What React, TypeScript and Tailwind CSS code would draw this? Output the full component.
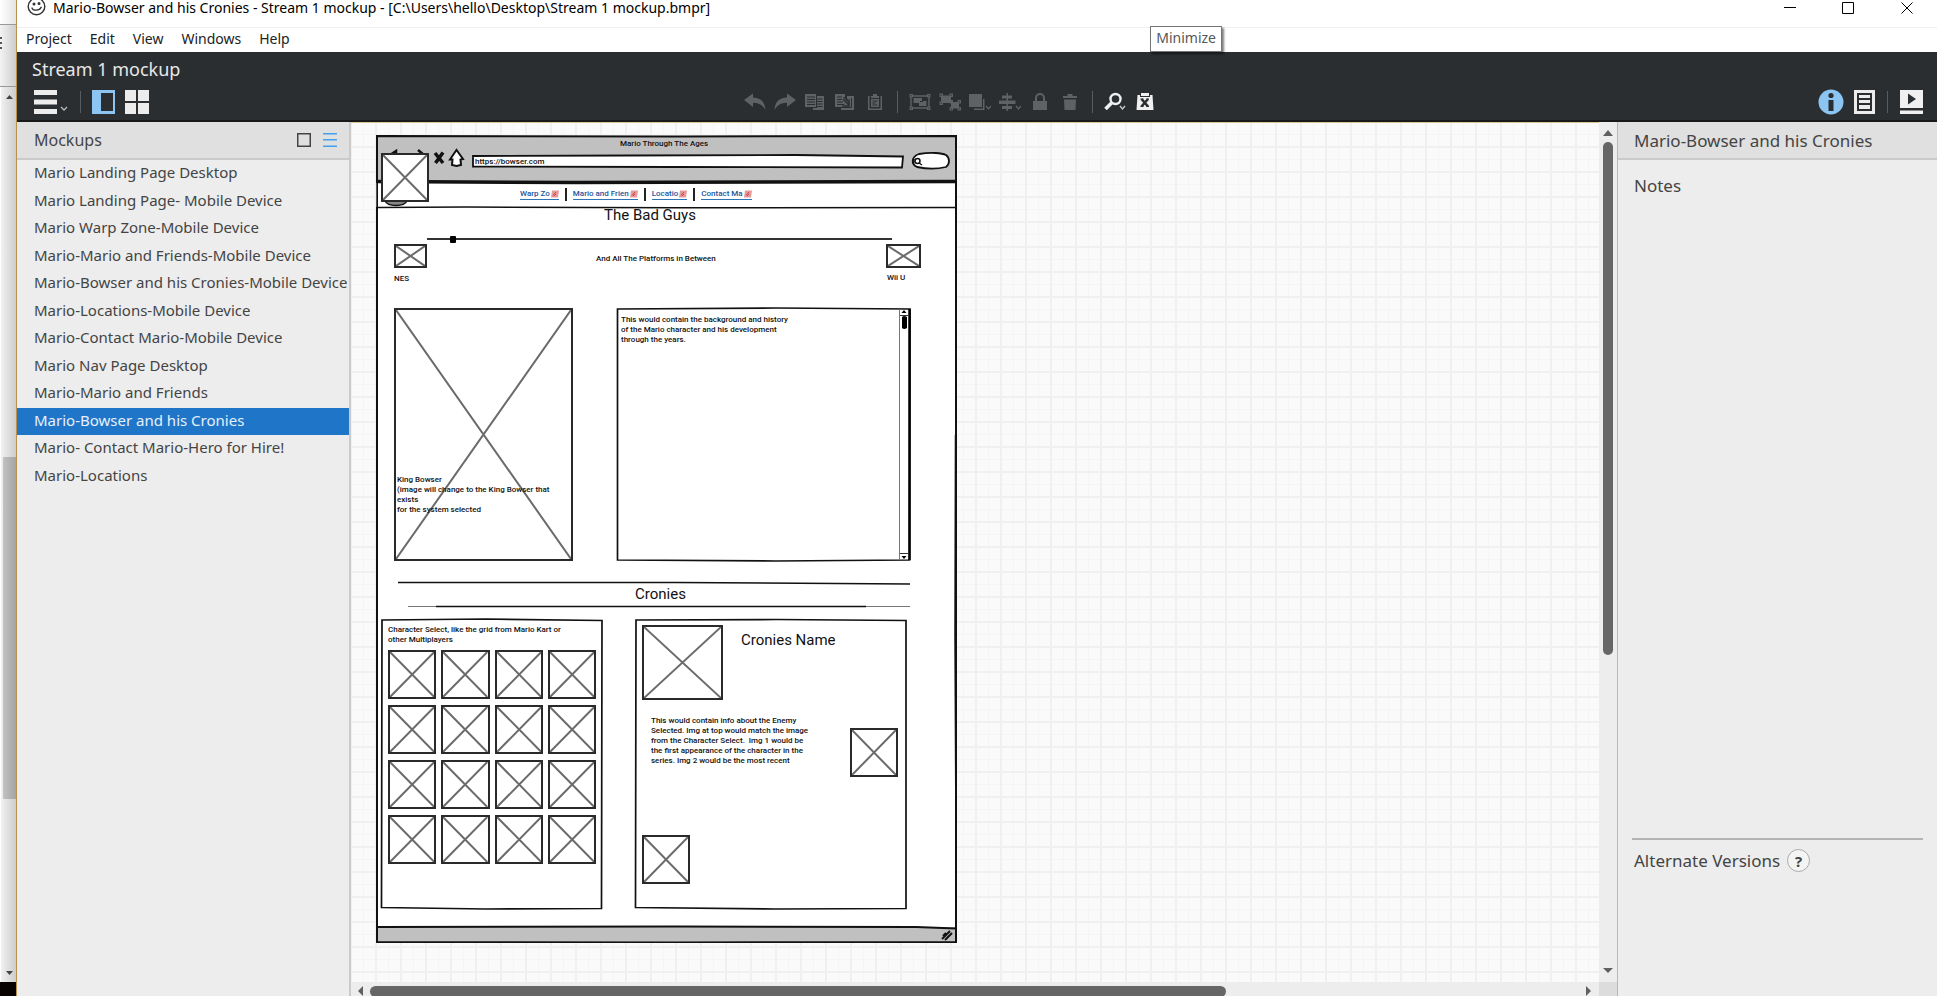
import React from "react";

const UI = "font-['Noto_Sans','Open_Sans',sans-serif]";

const mockups = [
  "Mario Landing Page Desktop",
  "Mario Landing Page- Mobile Device",
  "Mario Warp Zone-Mobile Device",
  "Mario-Mario and Friends-Mobile Device",
  "Mario-Bowser and his Cronies-Mobile Device",
  "Mario-Locations-Mobile Device",
  "Mario-Contact Mario-Mobile Device",
  "Mario Nav Page Desktop",
  "Mario-Mario and Friends",
  "Mario-Bowser and his Cronies",
  "Mario- Contact Mario-Hero for Hire!",
  "Mario-Locations",
];
const selectedMockup = "Mario-Bowser and his Cronies";

const menus = ["Project", "Edit", "View", "Windows", "Help"];

function Arrow({ dir, className = "" }: { dir: "up" | "down" | "left" | "right"; className?: string }) {
  const d = {
    up: "M0 6 L5 0 L10 6Z",
    down: "M0 0 L5 5 L10 0Z",
    left: "M5 0 L0 5 L5 10Z",
    right: "M0 0 L5 5 L0 10Z",
  }[dir];
  const vertical = dir === "up" || dir === "down";
  return (
    <svg width={vertical ? 10 : 5} height={vertical ? 6 : 10} className={`shrink-0 fill-[#606060] ${className}`} aria-hidden="true">
      <path d={d} />
    </svg>
  );
}

function BackgroundWindow() {
  return (
    <div className="flex w-4 shrink-0 flex-col bg-gradient-to-r from-[#f3f3f3] to-[#cdcdcd]">
      <div className="h-[25px] border-b border-[#999] bg-gradient-to-r from-white to-[#e4e4e4]" />
      <div className="flex h-[62px] flex-col gap-[3px] border-b border-[#999] pt-[12px]">
        <span className="h-[2px] w-[2px] bg-[#555]" />
        <span className="h-[2px] w-[2px] bg-[#555]" />
        <span className="h-[2px] w-[2px] bg-[#555]" />
      </div>
      <div className="flex flex-1 flex-col border-l border-white">
        <svg width="8" height="5" className="mt-[8px] ml-[5px] fill-[#444]" aria-hidden="true">
          <path d="M0 4 L3.5 0 L7 4Z" />
        </svg>
        <div className="flex flex-1 flex-col pl-[2px]">
          <div className="flex-[357]" />
          <div className="flex-[342] bg-gradient-to-r from-[#c2c2c2] to-[#a4a4a4]" />
          <div className="flex-[172]" />
        </div>
        <svg width="8" height="4" className="mb-[7px] ml-[5px] fill-[#444]" aria-hidden="true">
          <path d="M0 0 L3.5 4 L7 0Z" />
        </svg>
      </div>
      <div className="h-[14px] bg-[#080300]" />
    </div>
  );
}

function TitleBar() {
  return (
    <header className="flex h-[27px] items-start justify-between bg-white pl-[10px]">
      <div className="flex h-[16px] items-center gap-[7px]">
        <svg width="19" height="19" viewBox="0 0 19 19" className="-mt-1" fill="none" stroke="#333" strokeWidth="1.4" aria-hidden="true">
          <circle cx="9.5" cy="9.5" r="8.3" />
          <path d="M5 11.2c1 2.6 7.6 2.8 9-.6M4.6 11.4l1-.7M13.6 10l1.1.6" />
          <circle cx="7" cy="7" r=".8" fill="#333" />
          <circle cx="12" cy="6.6" r=".8" fill="#333" />
        </svg>
        <h1 className="text-[14px] leading-[16px] text-black">
          Mario-Bowser and his Cronies - Stream 1 mockup - [C:\Users\hello\Desktop\Stream 1 mockup.bmpr]
        </h1>
      </div>
      <div className="flex">
        <button aria-label="Minimize window" className="flex h-[16px] w-[58px] items-center justify-center">
          <svg width="12" height="12" stroke="#000"><path d="M0 5.5H12" /></svg>
        </button>
        <button aria-label="Maximize window" className="flex h-[16px] w-[58px] items-center justify-center">
          <svg width="12" height="12" stroke="#000" fill="none"><path d="M.5 .5H11.5V11.5H.5Z" /></svg>
        </button>
        <button aria-label="Close window" className="flex h-[16px] w-[60px] items-center justify-center">
          <svg width="12" height="12" stroke="#000"><path d="M.5 .5L11.5 11.5M11.5 .5L.5 11.5" /></svg>
        </button>
      </div>
    </header>
  );
}

function MenuBar() {
  return (
    <nav className="flex h-[25px] items-center gap-[18px] border-t border-[#f0f0f0] bg-white pb-[2px] pl-[9px]">
      {menus.map((m) => (
        <button key={m} className="text-[14px] leading-[20px] text-[#222]">
          {m}
        </button>
      ))}
    </nav>
  );
}

function ToolButton({ label, children }: { label: string; children: React.ReactNode }) {
  return (
    <button aria-label={label} className="flex h-[26px] w-[30px] items-center justify-center text-[#5f6163]">
      {children}
    </button>
  );
}

function Separator() {
  return <span className="mx-[7px] h-[22px] w-px bg-[#5a5d60]" />;
}

function Icon({ children, color = "currentColor" }: { children: React.ReactNode; color?: string }) {
  return (
    <svg width="22" height="20" viewBox="0 0 22 20" fill={color} aria-hidden="true">
      {children}
    </svg>
  );
}

const BG = "#2a2e31";

function Toolbar() {
  return (
    <section className="flex h-[70px] flex-col border-b-2 border-[#18191a] bg-[#2a2e31] pl-[15px]">
      <h2 className="h-[36px] text-[18px] leading-[34px] text-[#e8e8e8]">Stream 1 mockup</h2>
      <div className="flex h-[28px] items-center justify-between pr-[14px] pl-[2px]">
        <div className="flex items-center">
          <button aria-label="Main menu" className="flex items-end">
            <svg width="35" height="24" viewBox="0 0 35 24" aria-hidden="true">
              <path d="M0 0H23V5H0ZM0 9.5H23V14.5H0ZM0 19H23V24H0Z" fill="#ececec" />
              <path d="M27 17l3 3 3-3" fill="none" stroke="#bbb" strokeWidth="1.3" />
            </svg>
          </button>
          <span className="mr-[11px] ml-[11px] h-[22px] w-px bg-[#5a5d60]" />
          <button aria-label="Toggle navigator">
            <svg width="23" height="24" aria-hidden="true">
              <path d="M0 0H23V24H0Z" fill="#8cc4f2" />
              <path d="M9 3H21V21H9Z" fill={BG} />
            </svg>
          </button>
          <button aria-label="Thumbnail grid" className="ml-[10px]">
            <svg width="24" height="24" fill="#ececec" aria-hidden="true">
              <path d="M0 0H11V11H0ZM13 0H24V11H13ZM0 13H11V24H0ZM13 13H24V24H13Z" />
            </svg>
          </button>
        </div>

        <div className="flex items-center pr-[68px]">
          <ToolButton label="Undo">
            <Icon>
              <path d="M0 8L9 1.5V5.6C17 6 21 10 21.5 18C18.5 13 15 11 9 10.8V15Z" />
            </Icon>
          </ToolButton>
          <ToolButton label="Redo">
            <Icon>
              <path d="M22 8L13 1.5V5.6C5 6 1 10 .5 18C3.5 13 7 11 13 10.8V15Z" />
            </Icon>
          </ToolButton>
          <ToolButton label="Duplicate">
            <Icon>
              <path d="M1 2H12V15H1ZM13 4H20V18H9V16H13Z" />
              <path d="M3 5H11M3 7.5H11M3 10H11M3 12.5H11M13 7H18.500M13 9.500H18.500M13 12H18.500M13 14.500H18.500" stroke={BG} strokeWidth="1" />
            </Icon>
          </ToolButton>
          <ToolButton label="Copy">
            <Icon>
              <path d="M1 2H11V5H9L14 10V7H13V4H20V18H7V16H13V15H1Z" />
              <path d="M3 5H8M3 7.500H8M3 10H9M3 12.500H10" stroke={BG} strokeWidth="1" />
              <path d="M9 7L15 13M15 7.500V14H8.500" stroke={BG} strokeWidth="1.600" fill="none" />
              <path d="M17.500 6V15.500H12" stroke={BG} strokeWidth="1" fill="none" />
            </Icon>
          </ToolButton>
          <ToolButton label="Paste">
            <Icon>
              <path d="M4 4H5.500V16.500H16.500V4H18V18H4ZM7 4H9V2H13V4H15V6H7ZM7 7H15V15H7Z" />
              <path d="M8.500 9H13.500M8.500 11H11.500M8.500 13H13.500" stroke={BG} strokeWidth="1" />
            </Icon>
          </ToolButton>
          <Separator />
          <ToolButton label="Group">
            <Icon>
              <path d="M2 4H20V16H2Z" fill="none" stroke="currentColor" strokeWidth="1.400" />
              <path d="M4.500 6H13V9H17.500V14H10V11H4.500Z" />
              <path d="M11 9.500H14" stroke={BG} />
              <path d="M.5 2H4V5.500H.5ZM18 2H21.500V5.500H18ZM.5 14.500H4V18H.5ZM18 14.500H21.500V18H18Z" />
              <path d="M1.700 3.200H2.800V4.300H1.700ZM19.200 3.200H20.300V4.300H19.200ZM1.700 15.700H2.800V16.800H1.700ZM19.200 15.700H20.300V16.800H19.200Z" fill={BG} />
            </Icon>
          </ToolButton>
          <ToolButton label="Ungroup">
            <Icon>
              <path d="M2 3.500H12V11H2ZM12 10H20V16.500H12Z" />
              <path d="M.5 1.500H4V5H.5ZM10.500 1.500H14V5H10.500ZM.5 9.500H4V13H.5ZM10.500 8H14V11.500H10.500ZM18.500 8H22V11.500H18.500ZM10.500 15H14V18.500H10.500ZM18.500 15H22V18.500H18.500Z" />
              <path d="M1.700 2.700H2.800V3.800H1.700ZM11.700 2.700H12.800V3.800H11.700ZM1.700 10.700H2.800V11.800H1.700ZM19.700 9.200H20.800V10.300H19.700ZM11.700 16.200H12.800V17.300H11.700ZM19.700 16.200H20.800V17.300H19.700Z" fill={BG} />
            </Icon>
          </ToolButton>
          <ToolButton label="Layering">
            <Icon>
              <path d="M0 2H13V15H0ZM14 7H15.500V18H5V16.500H14Z" />
              <path d="M17 14l2.500 3 2.500-3" fill="none" stroke="currentColor" strokeWidth="1.300" />
            </Icon>
          </ToolButton>
          <ToolButton label="Alignment">
            <Icon>
              <path d="M7.500 1H9V19H7.500ZM3 3.500H13V6.500H3ZM0 8.500H16.500V12H0ZM3 14H13V17H3Z" />
              <path d="M17 14l2.500 3 2.500-3" fill="none" stroke="currentColor" strokeWidth="1.300" />
            </Icon>
          </ToolButton>
          <ToolButton label="Lock">
            <Icon>
              <path d="M4 9H18V18H4Z" />
              <path d="M7 10V6A4 4 0 0 1 15 6V10" fill="none" stroke="currentColor" strokeWidth="2" />
            </Icon>
          </ToolButton>
          <ToolButton label="Delete">
            <Icon>
              <path d="M4 4H8.500V2H13.500V4H18V6H4ZM5 7.500H17L16.500 18H5.500Z" />
            </Icon>
          </ToolButton>
          <Separator />
          <ToolButton label="Zoom">
            <Icon color="#f0f0f0">
              <path d="M1.500 17L7.500 11" stroke="#f0f0f0" strokeWidth="3.500" />
              <circle cx="11.500" cy="7" r="5" fill="none" stroke="#f0f0f0" strokeWidth="2.400" />
              <path d="M16 14l2.500 3 2.500-3" fill="none" stroke="#ccc" strokeWidth="1.300" />
            </Icon>
          </ToolButton>
          <ToolButton label="Toggle markup">
            <Icon color="#f0f0f0">
              <path d="M7 1H15V4H7ZM3.500 3H6V5H16V3H18.500L19.500 18H2.500Z" />
              <path d="M7.500 7L14 14.500M14 7L7.500 14.500" stroke={BG} strokeWidth="2.600" />
              <path d="M6.500 7H9.500M12.500 7H15M6.500 14.500H9.500M12.500 14.500H15" stroke={BG} strokeWidth="1" />
            </Icon>
          </ToolButton>
        </div>

        <div className="flex items-center">
          <button aria-label="Project information">
            <svg width="26" height="26" aria-hidden="true">
              <circle cx="13" cy="13" r="12.500" fill="#8cc4f2" />
              <circle cx="13" cy="6.500" r="2.600" fill={BG} />
              <path d="M10.500 11H15.500V22H10.500Z" fill={BG} />
            </svg>
          </button>
          <button aria-label="Inspector" className="ml-[10px]">
            <svg width="21" height="24" aria-hidden="true">
              <path d="M0 0H21V24H0Z" fill="#ececec" />
              <path d="M3 3H18V21H3Z" fill={BG} />
              <path d="M5 5H16V8H5ZM5 10H16V13H5ZM5 15H16V19H5Z" fill="#ececec" />
            </svg>
          </button>
          <span className="mx-[12px] h-[22px] w-px bg-[#5a5d60]" />
          <button aria-label="Full screen presentation">
            <svg width="23" height="24" aria-hidden="true">
              <path d="M0 0H23V18H0ZM0 20.500H23V24H0Z" fill="#f0f0f0" />
              <path d="M8 3.500L16 9L8 14.500Z" fill={BG} />
            </svg>
          </button>
        </div>
      </div>
    </section>
  );
}

function Navigator() {
  return (
    <aside className="flex w-[334px] shrink-0 flex-col border-r-2 border-[#cacaca] bg-[#ededed]">
      <div className="flex h-[38px] items-center justify-between border-b-2 border-[#cacaca] bg-[#e0e0e0] pr-[12px] pl-[17px]">
        <h2 className="text-[16px] leading-[22px] text-[#444]">Mockups</h2>
        <div className="flex items-center gap-[12px]">
          <button aria-label="Show thumbnails">
            <svg width="14" height="14" fill="none" stroke="#444" strokeWidth="1.500" aria-hidden="true">
              <path d="M.75 .75H13.250V13.250H.75Z" />
            </svg>
          </button>
          <button aria-label="Show list">
            <svg width="14" height="14" fill="#42a0ee" aria-hidden="true">
              <path d="M0 0H14V1.500H0ZM0 6H14V7.500H0ZM0 12.500H14V14H0Z" />
            </svg>
          </button>
        </div>
      </div>
      <ul className="flex h-[330px] flex-col overflow-hidden">
        {mockups.map((name) => (
          <li key={name} className="flex min-h-0 flex-1">
            <button
              aria-current={name === selectedMockup ? "page" : undefined}
              className={
                name === selectedMockup
                  ? "flex w-full items-center overflow-hidden bg-[#1f76c8] pb-[3px] pl-[17px] text-[15px] leading-[20px] whitespace-nowrap text-[#e6f0fa]"
                  : "mr-[2px] flex w-full items-center overflow-hidden pb-[3px] pl-[17px] text-[15px] leading-[20px] whitespace-nowrap text-[#444]"
              }
            >
              {name}
            </button>
          </li>
        ))}
      </ul>
    </aside>
  );
}

function Placeholder({ className = "" }: { className?: string }) {
  return (
    <div className={`border-2 border-[#2a2a2a] bg-white ${className}`}>
      <svg className="block h-full w-full" viewBox="0 0 100 100" preserveAspectRatio="none" stroke="#6b6b6b" aria-hidden="true">
        <path d="M0 0L100 100M100 0L0 100" strokeWidth="2" vectorEffect="non-scaling-stroke" />
      </svg>
    </div>
  );
}

function NavLink({ children }: { children: React.ReactNode }) {
  return (
    <a href="#mockup" className="flex h-[10px] items-center border-b border-[#2f74b5] leading-[10px] text-[#1c559c]">
      {children}
      <svg width="8" height="8" className="ml-px" aria-hidden="true">
        <path d="M1 0.500H8L7 7.500H0Z" fill="#e79a9a" />
        <path d="M2 5.500L5 2M3 6L5 4" stroke="#b33" strokeWidth=".8" />
      </svg>
    </a>
  );
}

function Artboard() {
  return (
    <article
      id="mockup"
      className="absolute top-[12px] left-[25px] h-[808px] w-[581px] bg-white font-['Roboto','Lato',sans-serif] text-[8px] leading-[10px] font-medium text-[#111]"
    >
      <svg width="581" height="808" viewBox="0 0 581 808" className="absolute inset-0" fill="none" stroke="#111" aria-hidden="true">
        <path d="M1 1H580V47H1Z" fill="#c0c0c0" stroke="none" />
        <path d="M1 792H580V807H1Z" fill="#c0c0c0" stroke="none" />
        <path d="M1 1L300 1.500L580 1L580 807L300 807.500L1 807Z" strokeWidth="2" />
        <path d="M579.500 300L579 500L580.500 806" strokeWidth="1.500" />
        <path d="M1 46.500L200 47.500L581 46.500" strokeWidth="3.500" />
        <path d="M1 72.500L90 72L300 72.800L581 72.500" strokeWidth="1.500" />
        <path d="M1 792L300 791.500L540 792L580 793.500" strokeWidth="2" />
        <path d="M0 48V72" stroke="#999" />
        <path d="M566 804L574 796M569 805L576 798M567 801L570 798" strokeWidth="2" />
        <path d="M59 18L67 28M67 17.500L59.500 28" strokeWidth="3.500" />
        <path d="M74 24.500L80.500 15L87 24L84.500 24.500L85 30L80.500 31L76 30L76.500 24.500Z" fill="#fff" strokeWidth="2" />
        <path d="M14 20L20 16V20M42 15L48 20" strokeWidth="2.500" />
        <path d="M9 66C12 72 28 72 31 66Z" fill="#888" strokeWidth="1.500" />
        <path d="M97 21L250 20.500L420 20L527 21.500L526 32.500L300 32L97 31.500Z" fill="#fff" strokeWidth="1.800" />
        <path d="M543 19C555 17 566 18 570 20C574 23 574 29 570 32C562 34 550 34 541 32C535 29 535 22 543 19Z" fill="#fff" strokeWidth="1.800" />
        <circle cx="541.500" cy="26" r="2.500" strokeWidth="1.500" />
        <path d="M538 24L537.500 29M543 28L546 30" strokeWidth="1.500" />
        <path d="M22 447.500L300 447.500L534 449" strokeWidth="1.500" />
        <path d="M60 471.500H490" strokeWidth="1.500" />
        <path d="M32 471.500H60M490 471.500H534" stroke="#777" strokeWidth="1" />
        <path d="M6 485L110 484L226 485.500L225.500 773.500L110 774L5.500 772.500Z" strokeWidth="1.700" />
        <path d="M260 485L400 484.500L530 485.500L530 773.500L400 774L259.500 772.500Z" strokeWidth="1.700" />
        <path d="M241.500 174L400 173L534 174L533.500 425L400 426L241.500 425Z" strokeWidth="1.700" />
      </svg>

      <p className="absolute top-[4px] left-[244px]">Mario Through The Ages</p>
      <Placeholder className="absolute top-[18px] left-[5px] h-[49px] w-[48px]" />
      <input
        aria-label="Address"
        readOnly
        value="https://bowser.com"
        className="absolute top-[22px] left-[99px] h-[9px] w-[420px] bg-transparent outline-none"
      />
      <input aria-label="Search" readOnly value="" className="absolute top-[21px] left-[548px] h-[9px] w-[20px] bg-transparent outline-none" />

      <nav className="absolute top-[53px] left-[144px] flex h-[13px] items-center gap-[6px]">
        <NavLink>Warp Zo</NavLink>
        <span className="h-[13px] w-[2px] bg-[#222]" />
        <NavLink>Mario and Frien</NavLink>
        <span className="h-[13px] w-[2px] bg-[#222]" />
        <NavLink>Locatio</NavLink>
        <span className="h-[13px] w-[2px] bg-[#222]" />
        <NavLink>Contact Ma</NavLink>
      </nav>

      <h2 className="absolute top-[71px] left-[228px] text-[15px] leading-[18px] font-normal">The Bad Guys</h2>

      <input
        type="range"
        aria-label="Platform"
        defaultValue={5}
        className="absolute top-[100px] left-[51px] h-[8px] w-[465px] appearance-none bg-[linear-gradient(#333,#333)] bg-[length:100%_2px] bg-center bg-no-repeat [&::-webkit-slider-thumb]:h-[7px] [&::-webkit-slider-thumb]:w-[6px] [&::-webkit-slider-thumb]:appearance-none [&::-webkit-slider-thumb]:rounded-[1px] [&::-webkit-slider-thumb]:bg-black"
      />
      <Placeholder className="absolute top-[109px] left-[18px] h-[24px] w-[33px]" />
      <p className="absolute top-[139px] left-[18px]">NES</p>
      <p className="absolute top-[119px] left-[220px]">And All The Platforms in Between</p>
      <Placeholder className="absolute top-[109px] left-[510px] h-[24px] w-[35px]" />
      <p className="absolute top-[138px] left-[511px]">Wii U</p>

      <Placeholder className="absolute top-[173px] left-[18px] h-[253px] w-[179px]" />
      <p className="absolute top-[340px] left-[21px] w-[162px]">
        King Bowser
        <br />
        (image will change to the King Bowser that exists
        <br />
        for the system selected
      </p>

      <textarea
        aria-label="Background and history"
        readOnly
        value={"This would contain the background and history\nof the Mario character and his development\nthrough the years."}
        className="absolute top-[180px] left-[245px] h-[236px] w-[274px] resize-none overflow-hidden bg-transparent outline-none"
      />
      <svg width="12" height="253" viewBox="0 0 12 253" className="absolute top-[173px] left-[523px]" fill="none" aria-hidden="true">
        <path d="M.5 1V252" stroke="#777" />
        <path d="M10.500 1V252" stroke="#000" strokeWidth="2.500" />
        <path d="M1 7.500H9M1 245.500H9" stroke="#333" />
        <path d="M2.500 5L5 2L7.500 5ZM2.500 248L5 251L7.500 248Z" fill="#000" />
        <path d="M3 9Q5 7 8 9V20Q5 22 3 20Z" fill="#000" />
      </svg>

      <h2 className="absolute top-[450px] left-[259px] text-[15px] leading-[18px] font-normal">Cronies</h2>

      <p className="absolute top-[490px] left-[12px] w-[205px]">
        Character Select, like the grid from Mario Kart or
        <br />
        other Multiplayers
      </p>
      <div className="absolute top-[515px] left-[12px] grid w-[208px] grid-cols-4 gap-x-[5px] gap-y-[6px]">
        {Array.from({ length: 16 }, (_, i) => (
          <Placeholder key={i} className="h-[49px]" />
        ))}
      </div>

      <Placeholder className="absolute top-[490px] left-[266px] h-[75px] w-[81px]" />
      <h3 className="absolute top-[496px] left-[365px] text-[15px] leading-[18px] font-normal">Cronies Name</h3>
      <p className="absolute top-[581px] left-[275px] w-[175px] whitespace-pre">
        {"This would contain info about the Enemy\nSelected. Img at top would match the image\nfrom the Character Select.  Img 1 would be\nthe first appearance of the character in the\nseries. Img 2 would be the most recent"}
      </p>
      <Placeholder className="absolute top-[593px] left-[474px] h-[49px] w-[48px]" />
      <Placeholder className="absolute top-[700px] left-[266px] h-[49px] w-[48px]" />
    </article>
  );
}

function Canvas() {
  return (
    <main className="flex min-w-0 flex-1 flex-col">
      <div className="flex min-h-0 flex-1">
        <div className="relative min-w-0 flex-1 overflow-hidden border-t border-[#d8c88c] bg-[#fafafa] bg-[linear-gradient(to_right,#f0f0f0_2px,transparent_2px),linear-gradient(to_bottom,#f0f0f0_2px,transparent_2px),linear-gradient(to_right,#f5f5f5_1px,transparent_1px),linear-gradient(to_bottom,#f5f5f5_1px,transparent_1px)] bg-[size:25px_25px] bg-[position:24px_0,0_23px,12px_0,0_11px]">
          <Artboard />
        </div>
        <div className="flex w-[18px] flex-col items-center bg-[#ededed] pt-[8px] pb-[8px]">
          <Arrow dir="up" />
          <div className="mt-[6px] flex w-full flex-1 flex-col items-center">
            <div className="w-[10px] flex-[512] rounded-full bg-[#666]" />
            <div className="flex-[313]" />
          </div>
          <Arrow dir="down" />
        </div>
      </div>
      <div className="flex h-[14px] shrink-0 overflow-hidden bg-[#ededed]">
        <div className="flex min-w-0 flex-1 items-start pt-[4px] pr-[8px] pl-[7px]">
          <Arrow dir="left" />
          <div className="mx-[7px] flex h-[11px] flex-1">
            <div className="flex-[855] rounded-full bg-[#666]" />
            <div className="flex-[353]" />
          </div>
          <Arrow dir="right" />
        </div>
        <div className="w-[18px] bg-[#dcdcdc]" />
      </div>
    </main>
  );
}

function InfoPanel() {
  return (
    <aside className="flex w-[320px] shrink-0 flex-col border-l border-[#b8b8b8] bg-[#ededed] text-[#444]">
      <h2 className="h-[38px] border-b-2 border-[#cacaca] bg-[#e0e0e0] pl-[16px] text-[17px] leading-[38px]">Mario-Bowser and his Cronies</h2>
      <div className="flex-1 pt-[15px] pl-[16px]">
        <h3 className="text-[17px] leading-[22px]">Notes</h3>
      </div>
      <div className="mr-[14px] ml-[14px] h-[158px] border-t-2 border-[#b4b4b4] pt-[9px]">
        <div className="flex items-center gap-[7px] pl-[2px]">
          <h3 className="text-[17px] leading-[22px]">Alternate Versions</h3>
          <button
            aria-label="About alternate versions"
            className="flex h-[23px] w-[23px] items-center justify-center rounded-full border border-[#aaa] bg-[#f4f4f4] text-[15px] leading-[20px] font-bold"
          >
            ?
          </button>
        </div>
      </div>
    </aside>
  );
}

export default function App() {
  return (
    <div className={`flex h-screen overflow-hidden bg-white ${UI}`}>
      <BackgroundWindow />
      <div className="relative flex min-w-0 flex-1 flex-col border-l border-[#b8924a]">
        <TitleBar />
        <MenuBar />
        <Toolbar />
        <div className="flex min-h-0 flex-1">
          <Navigator />
          <Canvas />
          <InfoPanel />
        </div>
        <div
          role="tooltip"
          className="absolute top-[26px] right-[715px] border border-[#767676] bg-white px-[5px] pb-[2px] text-[14px] leading-[22px] text-[#575757] shadow-[2px_2px_2px_rgba(0,0,0,0.5)]"
        >
          Minimize
        </div>
      </div>
    </div>
  );
}
